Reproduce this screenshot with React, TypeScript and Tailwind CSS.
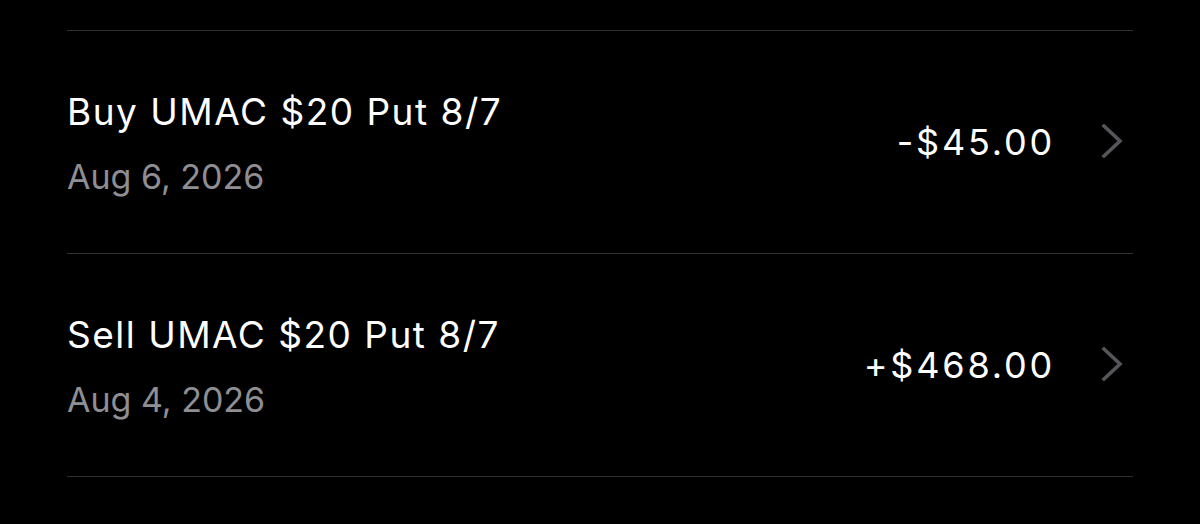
interface RowProps {
    Title: string,
    Date: string,
    Amount: string,
}

function Chevron() {
    return (
        <svg width="22" height="34" viewBox="0 0 22 34" fill="none" className="shrink-0 -mt-[2px]">
            <path d="M3 2 L19 17 L3 32" stroke="#56565a" strokeWidth="3.6" strokeLinecap="square" strokeLinejoin="miter" />
        </svg>
    );
}

function Row(props: RowProps) {
    const { Title, Date, Amount } = props;
    return (
        <div className="flex items-center justify-between h-[223px] border-t border-[#2e2e30]">
            <div className="flex flex-col pt-[3px]">
                <span className="text-[37px] leading-[44px] tracking-[1.5px] text-white">{Title}</span>
                <span className="text-[34px] leading-[40px] text-[#8e8e93] mt-[23px]">{Date}</span>
            </div>
            <div className="flex items-center gap-[46px] pr-[10px]">
                <span className="text-[36px] leading-[44px] tracking-[2.8px] text-white">{Amount}</span>
                <Chevron />
            </div>
        </div>
    );
}

export default function App() {
    return (
        <div className="w-[1200px] h-[524px] bg-black overflow-hidden font-['Inter',sans-serif] pt-[30px] px-[67px]">
            <Row Title="Buy UMAC $20 Put 8/7" Date="Aug 6, 2026" Amount="-$45.00" />
            <Row Title="Sell UMAC $20 Put 8/7" Date="Aug 4, 2026" Amount="+$468.00" />
            <div className="border-t border-[#2e2e30]"></div>
        </div>
    );
}
